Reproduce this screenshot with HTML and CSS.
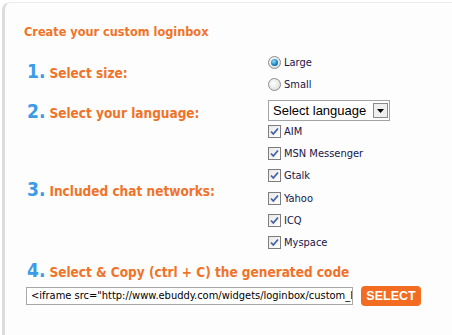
FILE: index.html
```html
<!DOCTYPE html>
<html>
<head>
<meta charset="utf-8">
<link rel="stylesheet" href="styles.css">
</head>
<body>
<div class="panel">
  <h1 class="title">Create your custom loginbox</h1>
  <div class="form">
    <div class="label l1"><span class="num">1.</span>Select size:</div>
    <div class="opts opts-radio">
      <div class="opt"><span class="radio on"></span>Large</div>
      <div class="opt"><span class="radio"></span>Small</div>
    </div>

    <div class="label l2"><span class="num">2.</span>Select your language:</div>
    <div class="opts">
      <div class="select"><span class="select-text">Select language</span><span class="select-btn"><svg width="7" height="4" viewBox="0 0 7 4"><path d="M0 0h7L3.5 4z" fill="#000"/></svg></span></div>
    </div>

    <div class="label l3"><span class="num">3.</span>Included chat networks:</div>
    <div class="opts opts-check">
      <div class="opt"><span class="check"><svg width="9" height="9" viewBox="0 0 9 9"><path d="M1 4.5l2.3 2.5L8 1.5" fill="none" stroke="#4660a8" stroke-width="1.8"/></svg></span>AIM</div>
      <div class="opt"><span class="check"><svg width="9" height="9" viewBox="0 0 9 9"><path d="M1 4.5l2.3 2.5L8 1.5" fill="none" stroke="#4660a8" stroke-width="1.8"/></svg></span>MSN Messenger</div>
      <div class="opt"><span class="check"><svg width="9" height="9" viewBox="0 0 9 9"><path d="M1 4.5l2.3 2.5L8 1.5" fill="none" stroke="#4660a8" stroke-width="1.8"/></svg></span>Gtalk</div>
      <div class="opt"><span class="check"><svg width="9" height="9" viewBox="0 0 9 9"><path d="M1 4.5l2.3 2.5L8 1.5" fill="none" stroke="#4660a8" stroke-width="1.8"/></svg></span>Yahoo</div>
      <div class="opt"><span class="check"><svg width="9" height="9" viewBox="0 0 9 9"><path d="M1 4.5l2.3 2.5L8 1.5" fill="none" stroke="#4660a8" stroke-width="1.8"/></svg></span>ICQ</div>
      <div class="opt"><span class="check"><svg width="9" height="9" viewBox="0 0 9 9"><path d="M1 4.5l2.3 2.5L8 1.5" fill="none" stroke="#4660a8" stroke-width="1.8"/></svg></span>Myspace</div>
    </div>
  </div>
  <div class="label step4"><span class="num">4.</span>Select &amp; Copy (ctrl + C) the generated code</div>
  <div class="code-row">
    <input class="code" type="text" readonly value="&lt;iframe src=&quot;http://www.ebuddy.com/widgets/loginbox/custom_loginbox.html&quot; width=&quot;260&quot; height=&quot;300&quot;&gt;&lt;/iframe&gt;">
    <div class="btn">SELECT</div>
  </div>
</div>
</body>
</html>
```
FILE: styles.css
```css
html, body {
  margin: 0;
  padding: 0;
  background: #ffffff;
}
body {
  width: 452px;
  height: 335px;
  overflow: hidden;
  font-family: "DejaVu Sans Condensed", "DejaVu Sans", sans-serif;
}
.panel {
  margin: 2px 0 0 2px;
  height: 340px;
  border-left: 3px solid #dcdcdc;
  border-top: 1px solid #ececec;
  border-top-left-radius: 8px;
  background: #fdfdfd;
  padding: 0 0 0 19px;
}
.title {
  margin: 0;
  padding-top: 22px;
  font-size: 12.6px;
  line-height: 14px;
  font-weight: bold;
  color: #f0732a;
}
.form {
  display: grid;
  grid-template-columns: 244px auto;
  grid-template-rows: 45px 29px auto;
  align-items: start;
  margin-top: 11px;
}
.label {
  display: flex;
  align-items: baseline;
  height: 20px;
  line-height: 20px;
  font-size: 13.5px;
  font-weight: bold;
  color: #f0732a;
  padding-left: 3px;
}
.l1 { margin-top: 11px; }
.l2 { margin-top: 6px; }
.l3 { margin-top: 55px; }
.num {
  font-size: 19px;
  font-weight: bold;
  color: #3a9be9;
  margin-right: 4px;
}
.opts {
  display: flex;
  flex-direction: column;
}
.opts-radio {
  gap: 9px;
  padding-top: 6px;
}
.opts-check {
  gap: 9.2px;
  padding-top: 1px;
}
.opt {
  display: flex;
  align-items: center;
  height: 13px;
  font-size: 11px;
  color: #16164a;
}
.radio {
  width: 11px;
  height: 11px;
  border-radius: 50%;
  border: 1px solid #8c8c8c;
  background: radial-gradient(circle at 40% 40%, #ffffff 0%, #e6e6e6 60%, #cfcfcf 100%);
  margin-right: 3px;
  position: relative;
}
.radio.on::after {
  content: "";
  position: absolute;
  left: 2px;
  top: 2px;
  width: 7px;
  height: 7px;
  border-radius: 50%;
  background: radial-gradient(circle at 40% 35%, #8fe0ff 0%, #1a86c0 55%, #0b4f7c 100%);
}
.check {
  width: 11px;
  height: 11px;
  border: 1px solid #7d7d7d;
  background: linear-gradient(135deg, #e8e8e8, #ffffff);
  margin-right: 3px;
  display: flex;
  align-items: center;
  justify-content: center;
}
.select {
  display: flex;
  align-items: center;
  width: 120px;
  height: 19px;
  border: 1px solid #a3a3a3;
  background: #fff;
  margin-top: 5px;
}
.select-text {
  flex: 1;
  font-family: "Liberation Sans", Arial, sans-serif;
  font-size: 13px;
  color: #000;
  padding-left: 4px;
}
.select-btn {
  width: 15px;
  height: 15px;
  margin-right: 1px;
  border: 1px solid #8a8a8a;
  background: #eeeeee;
  display: flex;
  align-items: center;
  justify-content: center;
  box-sizing: border-box;
}
.step4 {
  margin-top: 11px;
}
.code-row {
  display: flex;
  align-items: center;
  height: 20px;
  margin-top: 6px;
}
.code {
  box-sizing: border-box;
  width: 327px;
  height: 18px;
  margin: 0 0 0 2px;
  border: 1px solid #a8a8a8;
  border-radius: 0;
  background: #fff;
  font-family: "DejaVu Sans Condensed", "DejaVu Sans", sans-serif;
  font-size: 11px;
  color: #000;
  padding: 0 0 0 4px;
  outline: none;
}
.btn {
  margin-left: 8px;
  width: 60px;
  height: 20px;
  line-height: 20px;
  border-radius: 4px;
  background: #f26c21;
  color: #fff;
  font-family: "Liberation Sans", Arial, sans-serif;
  font-weight: bold;
  font-size: 12.5px;
  text-align: center;
}
```
